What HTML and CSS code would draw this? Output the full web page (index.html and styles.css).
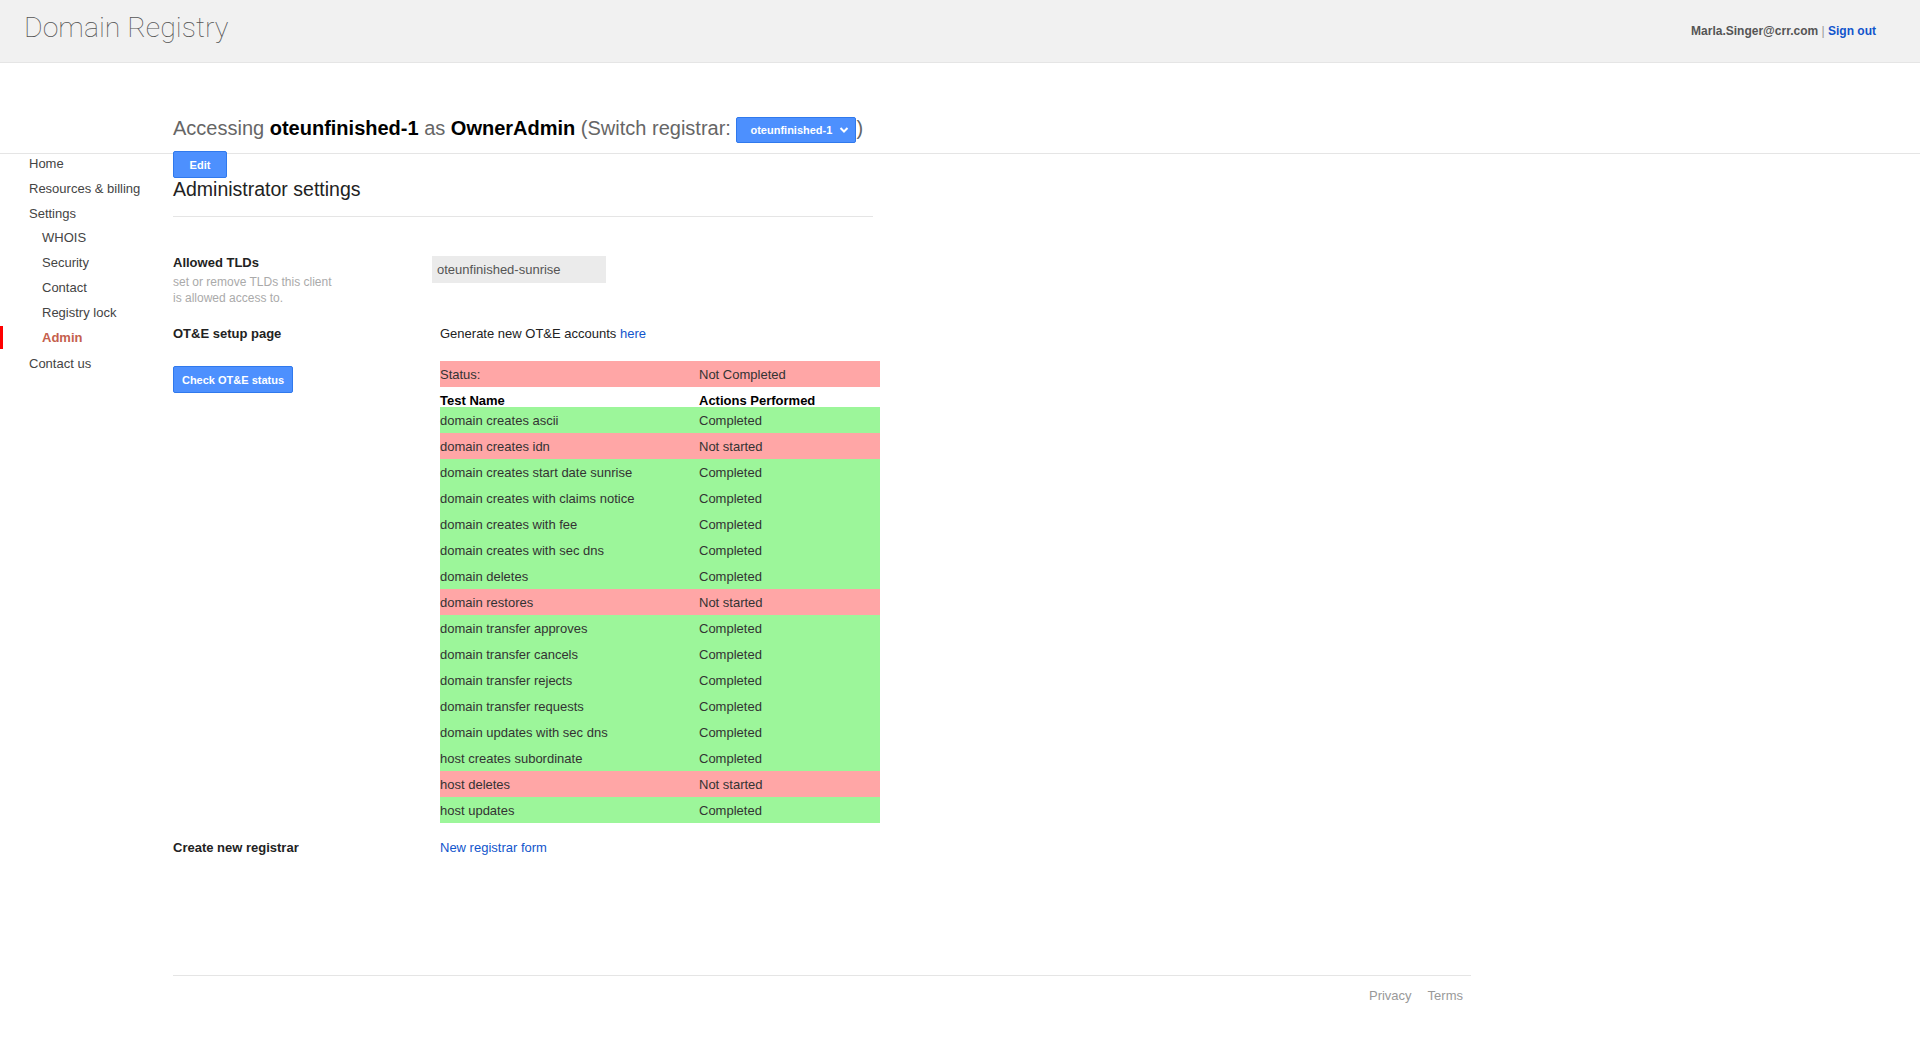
FILE: index.html
```html
<!DOCTYPE html>
<html>
<head>
<meta charset="utf-8">
<title>Domain Registry</title>
<link rel="stylesheet" href="styles.css">
</head>
<body>
<header class="topbar">
  <div class="brand">Domain Registry</div>
  <div class="user"><span class="email">Marla.Singer@crr.com</span> <span class="sep">|</span> <a class="signout" href="#">Sign out</a></div>
</header>

<section class="access">
  <div class="access-line">Accessing <b>oteunfinished-1</b> as <b>OwnerAdmin</b> (Switch registrar: <span class="reg-select">oteunfinished-1<svg class="chev" width="10" height="8" viewBox="0 0 10 8"><path d="M1.5 2 L5 5.5 L8.5 2" fill="none" stroke="#fff" stroke-width="2"/></svg></span>)</div>
</section>

<div class="main">
  <nav class="sidebar">
    <a class="nav-item" href="#">Home</a>
    <a class="nav-item" href="#">Resources &amp; billing</a>
    <a class="nav-item" href="#">Settings</a>
    <a class="nav-item sub first-sub" href="#">WHOIS</a>
    <a class="nav-item sub" href="#">Security</a>
    <a class="nav-item sub" href="#">Contact</a>
    <a class="nav-item sub" href="#">Registry lock</a>
    <a class="nav-item sub active" href="#">Admin</a>
    <a class="nav-item last" href="#">Contact us</a>
  </nav>

  <div class="content">
    <button class="btn btn-edit">Edit</button>
    <h1 class="page-title">Administrator settings</h1>

    <div class="row row-tld">
      <div class="label">
        <div class="label-title">Allowed TLDs</div>
        <div class="label-desc">set or remove TLDs this client<br>is allowed access to.</div>
      </div>
      <div class="value">
        <div class="tld-input">oteunfinished-sunrise</div>
      </div>
    </div>

    <div class="row row-ote">
      <div class="label"><div class="label-title">OT&amp;E setup page</div></div>
      <div class="value text">Generate new OT&amp;E accounts <a href="#">here</a></div>
    </div>

    <div class="row row-status">
      <div class="label"><button class="btn btn-check">Check OT&amp;E status</button></div>
      <div class="value">
        <table class="status">
          <tr class="bad status-row"><td class="c1">Status:</td><td>Not Completed</td></tr>
          <tr class="head"><th class="c1">Test Name</th><th>Actions Performed</th></tr>
          <tr class="ok"><td class="c1">domain creates ascii</td><td>Completed</td></tr>
          <tr class="bad"><td class="c1">domain creates idn</td><td>Not started</td></tr>
          <tr class="ok"><td class="c1">domain creates start date sunrise</td><td>Completed</td></tr>
          <tr class="ok"><td class="c1">domain creates with claims notice</td><td>Completed</td></tr>
          <tr class="ok"><td class="c1">domain creates with fee</td><td>Completed</td></tr>
          <tr class="ok"><td class="c1">domain creates with sec dns</td><td>Completed</td></tr>
          <tr class="ok"><td class="c1">domain deletes</td><td>Completed</td></tr>
          <tr class="bad"><td class="c1">domain restores</td><td>Not started</td></tr>
          <tr class="ok"><td class="c1">domain transfer approves</td><td>Completed</td></tr>
          <tr class="ok"><td class="c1">domain transfer cancels</td><td>Completed</td></tr>
          <tr class="ok"><td class="c1">domain transfer rejects</td><td>Completed</td></tr>
          <tr class="ok"><td class="c1">domain transfer requests</td><td>Completed</td></tr>
          <tr class="ok"><td class="c1">domain updates with sec dns</td><td>Completed</td></tr>
          <tr class="ok"><td class="c1">host creates subordinate</td><td>Completed</td></tr>
          <tr class="bad"><td class="c1">host deletes</td><td>Not started</td></tr>
          <tr class="ok"><td class="c1">host updates</td><td>Completed</td></tr>
        </table>
      </div>
    </div>

    <div class="row row-new">
      <div class="label"><div class="label-title">Create new registrar</div></div>
      <div class="value text"><a href="#">New registrar form</a></div>
    </div>
  </div>
</div>

<footer class="footer">
  <a href="#">Privacy</a>
  <a href="#">Terms</a>
</footer>
</body>
</html>
```

FILE: styles.css
```css
* { box-sizing: border-box; }

body {
  margin: 0;
  font-family: "Liberation Sans", Arial, sans-serif;
  font-size: 13px;
  color: #333;
  background: #fff;
}

a { text-decoration: none; }

.topbar {
  height: 63px;
  background: #f1f1f1;
  border-bottom: 1px solid #e5e5e5;
  display: flex;
  justify-content: space-between;
  align-items: flex-start;
}

.brand {
  padding: 14px 0 0 24px;
  font-family: Roboto, "Liberation Sans", sans-serif;
  font-weight: 100;
  font-size: 28.5px;
  line-height: 28px;
  color: #555;
}

.user {
  padding: 23px 44px 0 0;
  font-size: 12px;
  line-height: 16px;
  font-weight: bold;
}
.user .email { color: #555; }
.user .sep { color: #999; font-weight: normal; }
.user .signout { color: #15c; }

.access {
  height: 91px;
  border-bottom: 1px solid #e5e5e5;
  padding: 52px 0 0 173px;
}

.access-line {
  font-size: 20px;
  line-height: 26px;
  color: #666;
}
.access-line b { color: #000; }

.reg-select {
  display: inline-flex;
  align-items: center;
  justify-content: space-between;
  vertical-align: baseline;
  width: 120px;
  height: 26px;
  padding: 0 6px 0 13px;
  background: #4d90fe;
  border: 1px solid #3079ed;
  border-radius: 2px;
  color: #fff;
  font-size: 11px;
  font-weight: bold;
  line-height: 24px;
  position: relative;
  top: -1px;
}
.chev { display: block; }

.main {
  display: flex;
  align-items: flex-start;
}

.sidebar {
  width: 173px;
  flex: none;
  display: flex;
  flex-direction: column;
  gap: 5px;
}

.nav-item {
  display: block;
  position: relative;
  line-height: 20px;
  padding-left: 29px;
  color: #444;
  font-size: 13px;
}
.nav-item.sub { padding-left: 42px; }
.nav-item.first-sub { margin-top: -1px; }
.nav-item.last { margin-top: 1px; }
.nav-item.active {
  color: #c5604d;
  font-weight: bold;
}
.nav-item.active::before {
  content: "";
  position: absolute;
  left: 0;
  top: -2px;
  width: 3px;
  height: 23px;
  background: #ff0000;
}

.content {
  width: 707px;
  flex: none;
}

.btn {
  display: block;
  background: #4d90fe;
  border: 1px solid #3079ed;
  border-radius: 2px;
  color: #fff;
  font-family: "Liberation Sans", Arial, sans-serif;
  font-size: 11px;
  font-weight: bold;
  padding: 0;
  height: 27px;
  cursor: pointer;
}

.btn-edit {
  width: 54px;
  margin-top: -3px;
}

.page-title {
  margin: 0;
  width: 700px;
  font-size: 19.5px;
  font-weight: normal;
  color: #222;
  line-height: 23px;
  padding-bottom: 15px;
  border-bottom: 1px solid #e5e5e5;
}

.row {
  display: flex;
  align-items: flex-start;
}
.label {
  width: 267px;
  flex: none;
}
.label-title {
  font-weight: bold;
  color: #222;
  line-height: 18px;
}
.label-desc {
  margin-top: 2px;
  font-size: 12px;
  line-height: 16px;
  color: #aaa;
}
.value.text {
  line-height: 18px;
  color: #222;
}
.value a { color: #15c; }

.row-tld { margin-top: 37px; }
.tld-input {
  margin-top: 2px;
  margin-left: -8px;
  width: 174px;
  height: 27px;
  line-height: 27px;
  padding-left: 5px;
  background: #ebebeb;
  color: #555;
}

.row-ote { margin-top: 19px; }
.row-status { margin-top: 18px; }
.btn-check {
  margin-top: 5px;
  width: 120px;
  height: 27px;
}

.status {
  border-collapse: collapse;
  border-spacing: 0;
  width: 440px;
}
.status td, .status th {
  padding: 0;
  text-align: left;
  font-size: 13px;
  height: 26px;
  color: #333;
}
.status .c1 { width: 259px; }
.status tr.head th {
  height: 20px;
  line-height: 13px;
  vertical-align: bottom;
  color: #000;
  font-weight: bold;
  padding-bottom: 0;
}
.status tr.ok { background: #9cf69a; }
.status tr.bad { background: #ffa6a6; }

.row-new { margin-top: 16px; }

.footer {
  margin: 118px 0 0 173px;
  width: 1298px;
  border-top: 1px solid #e5e5e5;
  display: flex;
  justify-content: flex-end;
  gap: 16px;
  padding: 11px 8px 0 0;
  line-height: 18px;
}
.footer a { color: #999; font-size: 13px; }
```
